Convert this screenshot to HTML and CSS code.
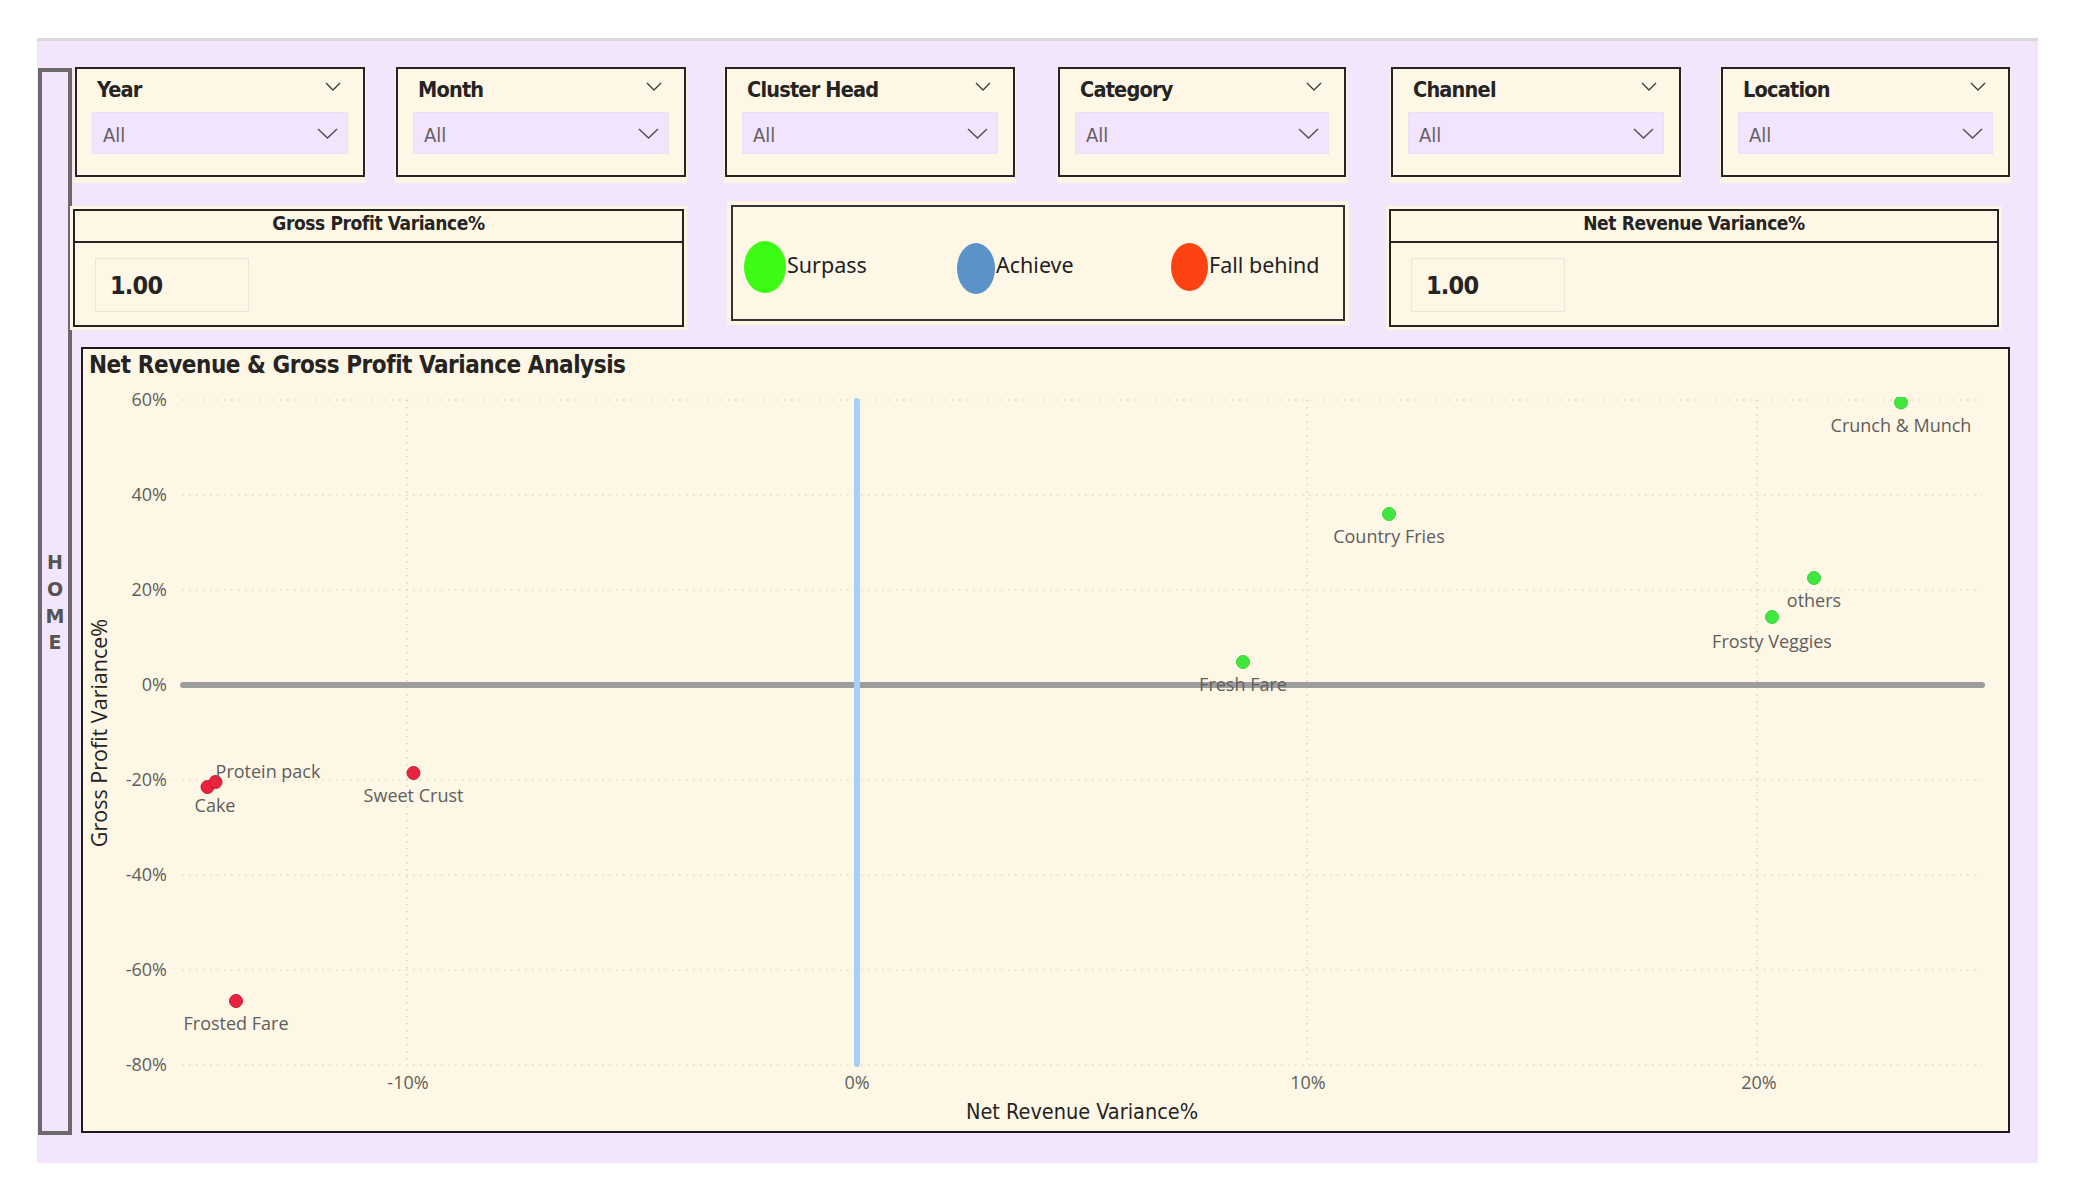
FILE: index.html
```html
<!DOCTYPE html>
<html>
<head>
<meta charset="utf-8">
<title>Variance Analysis</title>
<link rel="stylesheet" href="styles.css">
</head>
<body>
<div class="canvas">
  <div class="home-bar"><div class="home-text">H<br>O<br>M<br>E</div></div>
  <div class="main">
    <div class="slicer-row">
      <div class="slicer"><div class="slicer-head"><span class="slicer-title">Year</span><svg class="chev-s" viewBox="0 0 16 9"><polyline points="1,1 8,8 15,1"/></svg></div><div class="dropdown"><span>All</span><svg class="chev-d" viewBox="0 0 21 11"><polyline points="1,1 10.5,10 20,1"/></svg></div></div>
      <div class="slicer"><div class="slicer-head"><span class="slicer-title">Month</span><svg class="chev-s" viewBox="0 0 16 9"><polyline points="1,1 8,8 15,1"/></svg></div><div class="dropdown"><span>All</span><svg class="chev-d" viewBox="0 0 21 11"><polyline points="1,1 10.5,10 20,1"/></svg></div></div>
      <div class="slicer"><div class="slicer-head"><span class="slicer-title">Cluster Head</span><svg class="chev-s" viewBox="0 0 16 9"><polyline points="1,1 8,8 15,1"/></svg></div><div class="dropdown"><span>All</span><svg class="chev-d" viewBox="0 0 21 11"><polyline points="1,1 10.5,10 20,1"/></svg></div></div>
      <div class="slicer"><div class="slicer-head"><span class="slicer-title">Category</span><svg class="chev-s" viewBox="0 0 16 9"><polyline points="1,1 8,8 15,1"/></svg></div><div class="dropdown"><span>All</span><svg class="chev-d" viewBox="0 0 21 11"><polyline points="1,1 10.5,10 20,1"/></svg></div></div>
      <div class="slicer"><div class="slicer-head"><span class="slicer-title">Channel</span><svg class="chev-s" viewBox="0 0 16 9"><polyline points="1,1 8,8 15,1"/></svg></div><div class="dropdown"><span>All</span><svg class="chev-d" viewBox="0 0 21 11"><polyline points="1,1 10.5,10 20,1"/></svg></div></div>
      <div class="slicer"><div class="slicer-head"><span class="slicer-title">Location</span><svg class="chev-s" viewBox="0 0 16 9"><polyline points="1,1 8,8 15,1"/></svg></div><div class="dropdown"><span>All</span><svg class="chev-d" viewBox="0 0 21 11"><polyline points="1,1 10.5,10 20,1"/></svg></div></div>
    </div>

    <div class="kpi-row">
      <div class="kpi kpi-gp">
        <div class="kpi-head">Gross Profit Variance%</div>
        <div class="kpi-value">1.00</div>
      </div>
      <div class="legend">
        <div class="legend-item"><span class="dot-lg dot-green"></span><span>Surpass</span></div>
        <div class="legend-item"><span class="dot-lg dot-blue"></span><span>Achieve</span></div>
        <div class="legend-item"><span class="dot-lg dot-red"></span><span>Fall behind</span></div>
      </div>
      <div class="kpi kpi-nr">
        <div class="kpi-head">Net Revenue Variance%</div>
        <div class="kpi-value">1.00</div>
      </div>
    </div>

    <div class="chart">
      <div class="chart-title">Net Revenue &amp; Gross Profit Variance Analysis</div>
      <svg class="plot" viewBox="83 349 1925 782">
        <defs>
          <clipPath id="plotclip"><rect x="176" y="397" width="1812" height="676"/></clipPath>
        </defs>
        <g class="grid">
          <line x1="182" y1="400" x2="1982" y2="400"/>
          <line x1="182" y1="495" x2="1982" y2="495"/>
          <line x1="182" y1="590" x2="1982" y2="590"/>
          <line x1="182" y1="780" x2="1982" y2="780"/>
          <line x1="182" y1="875" x2="1982" y2="875"/>
          <line x1="182" y1="970" x2="1982" y2="970"/>
          <line x1="182" y1="1065" x2="1982" y2="1065"/>
          <line x1="407" y1="400" x2="407" y2="1065"/>
          <line x1="1307" y1="400" x2="1307" y2="1065"/>
          <line x1="1757" y1="400" x2="1757" y2="1065"/>
        </g>
        <g class="ylab">
          <text x="167" y="401">60%</text>
          <text x="167" y="496">40%</text>
          <text x="167" y="591">20%</text>
          <text x="167" y="686">0%</text>
          <text x="167" y="781">-20%</text>
          <text x="167" y="876">-40%</text>
          <text x="167" y="971">-60%</text>
          <text x="167" y="1066">-80%</text>
        </g>
        <g class="xlab">
          <text x="408" y="1084">-10%</text>
          <text x="857" y="1084">0%</text>
          <text x="1308" y="1084">10%</text>
          <text x="1759" y="1084">20%</text>
        </g>
        <text class="xtitle" x="1082" y="1113">Net Revenue Variance%</text>
        <text class="ytitle" transform="translate(101 733) rotate(-90)">Gross Profit Variance%</text>
        <line class="ref-h" x1="183" y1="685" x2="1982" y2="685"/>
        <line class="ref-v" x1="857" y1="401" x2="857" y2="1064"/>
        <g clip-path="url(#plotclip)">
          <circle class="pt-g" cx="1901" cy="402.5" r="6.5"/>
          <circle class="pt-g" cx="1389" cy="514" r="6.5"/>
          <circle class="pt-g" cx="1814" cy="578" r="6.5"/>
          <circle class="pt-g" cx="1772" cy="617" r="6.5"/>
          <circle class="pt-g" cx="1243" cy="662" r="6.5"/>
          <circle class="pt-r" cx="413.5" cy="773" r="6.5"/>
          <circle class="pt-r" cx="207.5" cy="787" r="6.5"/>
          <circle class="pt-r" cx="215.5" cy="782" r="6.5"/>
          <circle class="pt-r" cx="236" cy="1001" r="6.5"/>
        </g>
        <g class="dlab">
          <text x="1901" y="427">Crunch &amp; Munch</text>
          <text x="1389" y="538">Country Fries</text>
          <text x="1814" y="602">others</text>
          <text x="1772" y="643">Frosty Veggies</text>
          <text x="1243" y="686">Fresh Fare</text>
          <text x="413.5" y="797">Sweet Crust</text>
          <text x="215" y="807">Cake</text>
          <text x="268" y="773">Protein pack</text>
          <text x="236" y="1025">Frosted Fare</text>
        </g>
      </svg>
    </div>
  </div>
</div>
</body>
</html>
```

FILE: styles.css
```css
html, body {
  margin: 0;
  padding: 0;
  background: #ffffff;
}

body {
  width: 2075px;
  height: 1200px;
  overflow: hidden;
  font-family: "DejaVu Sans Condensed", "DejaVu Sans", sans-serif;
  color: #252423;
}

.canvas {
  margin: 38px 0 0 37px;
  width: 2001px;
  height: 1125px;
  box-sizing: border-box;
  border-top: 3px solid #d9d9d9;
  background: #f3e6fc;
  display: flex;
  align-items: flex-start;
}

/* HOME navigation bar */
.home-bar {
  margin: 27px 0 0 1px;
  width: 34px;
  height: 1067px;
  box-sizing: border-box;
  border: 4px solid #6c696c;
  display: flex;
  align-items: center;
  justify-content: center;
}

.home-text {
  font-family: "DejaVu Sans", sans-serif;
  font-weight: bold;
  font-size: 19px;
  line-height: 26.7px;
  color: #545454;
  text-align: center;
  margin-top: 2px;
}

.main {
  margin: 26px 0 0 3px;
  width: 1935px;
}

/* Slicers */
.slicer-row {
  display: flex;
  height: 110px;
}

.slicer {
  width: 290px;
  height: 110px;
  box-sizing: border-box;
  border: 2px solid #252423;
  background: #fef7e6;
  padding: 0 15px;
  box-shadow: 0 5px 0 1px #fdf5e4;
}

.slicer:nth-child(2) { margin-left: 31px; }
.slicer:nth-child(3) { margin-left: 39px; }
.slicer:nth-child(4) { margin-left: 43px; width: 288px; }
.slicer:nth-child(5) { margin-left: 45px; }
.slicer:nth-child(6) { margin-left: 40px; width: 289px; }

.slicer-head {
  height: 43px;
  box-sizing: border-box;
  display: flex;
  justify-content: space-between;
  align-items: flex-start;
  padding: 8px 7px 0 5px;
}

.slicer-title {
  font-weight: bold;
  font-size: 21.5px;
  line-height: 26px;
  color: #252423;
  letter-spacing: -0.8px;
}

.chev-s {
  width: 16px;
  height: 9px;
  margin-top: 5px;
  fill: none;
  stroke: #3b3a39;
  stroke-width: 1.3;
}

.dropdown {
  height: 42px;
  box-sizing: border-box;
  background: #f1e4fc;
  border: 1px solid #ebe0f3;
  display: flex;
  align-items: center;
  justify-content: space-between;
  padding: 0 9px 0 10px;
  font-size: 20px;
  color: #646064;
}

.dropdown span {
  margin-top: 3px;
}

.chev-d {
  width: 21px;
  height: 11px;
  margin-top: 1px;
  fill: none;
  stroke: #4d4a4d;
  stroke-width: 1.3;
}

/* KPI row */
.kpi-row {
  margin-top: 28px;
  height: 122px;
  display: flex;
  align-items: flex-start;
}

.kpi {
  margin-top: 4px;
  height: 118px;
  box-sizing: border-box;
  border: 2px solid #252423;
  background: #fef7e6;
  box-shadow: 0 0 0 3px #fdf5e4;
}

.kpi-gp {
  margin-left: -2px;
  width: 611px;
}

.kpi-nr {
  margin-left: 44px;
  width: 610px;
}

.kpi-head {
  height: 30px;
  border-bottom: 2px solid #252423;
  text-align: center;
  font-weight: bold;
  font-size: 19px;
  line-height: 25px;
  letter-spacing: -0.4px;
}

.kpi-value {
  margin: 15px 0 0 20px;
  width: 154px;
  height: 54px;
  box-sizing: border-box;
  border: 1px solid #ebe5da;
  padding-left: 14px;
  font-weight: bold;
  font-size: 25px;
  line-height: 54px;
  letter-spacing: -0.8px;
  color: #252423;
}

/* Legend */
.legend {
  margin-left: 47px;
  width: 614px;
  height: 116px;
  box-sizing: border-box;
  border: 2px solid #333333;
  background: #fef7e6;
  box-shadow: 0 0 0 4px #fdf5e4;
  display: grid;
  grid-template-columns: 213px 214px auto;
  align-items: center;
  padding: 8px 0 0 11px;
  font-family: "Noto Sans", "Open Sans", sans-serif;
  font-size: 21.5px;
  color: #1f1f1f;
}

.legend-item {
  display: flex;
  align-items: center;
  gap: 1px;
}

.legend-item span:last-child {
  margin-top: -5px;
}

.dot-lg {
  display: block;
  border-radius: 50%;
}

.dot-green { width: 42px; height: 52px; background: #3cfb14; }
.dot-blue  { width: 38px; height: 51px; background: #5b92c8; margin-top: 3px; }
.dot-red   { width: 37px; height: 48px; background: #fe4313; }

/* Chart */
.chart {
  margin: 20px 0 0 6px;
  width: 1929px;
  height: 786px;
  box-sizing: border-box;
  border: 2px solid #1e1e1e;
  background: #fef7e6;
  position: relative;
}

.chart-title {
  padding: 2px 0 0 6px;
  font-weight: bold;
  font-size: 24px;
  line-height: 29px;
  color: #252423;
  letter-spacing: -0.45px;
}

.plot {
  position: absolute;
  left: 0;
  top: 0;
  width: 1925px;
  height: 782px;
  overflow: visible;
}

.grid line {
  stroke: #cdcac4;
  stroke-width: 1.2;
  stroke-dasharray: 1.5 5.5;
}

.ylab text {
  font-family: "Open Sans", "Noto Sans", sans-serif;
  font-size: 18px;
  fill: #605e5c;
  text-anchor: end;
  dominant-baseline: middle;
}

.xlab text {
  font-family: "Open Sans", "Noto Sans", sans-serif;
  font-size: 18px;
  fill: #605e5c;
  text-anchor: middle;
  dominant-baseline: middle;
}

.xtitle {
  font-family: "DejaVu Sans Condensed", "DejaVu Sans", sans-serif;
  font-size: 21.5px;
  fill: #252423;
  text-anchor: middle;
  dominant-baseline: middle;
}

.ytitle {
  font-family: "Open Sans", "Noto Sans", sans-serif;
  font-size: 21.5px;
  fill: #252423;
  text-anchor: middle;
  dominant-baseline: middle;
}

.ref-h {
  stroke: #9d9d9d;
  stroke-width: 6;
  stroke-linecap: round;
}

.ref-v {
  stroke: #a7d0f8;
  stroke-width: 6;
  stroke-linecap: round;
}

.pt-g {
  fill: #3fe73f;
  stroke: #36d636;
  stroke-width: 1;
}

.pt-r {
  fill: #e9233d;
  stroke: #c8182f;
  stroke-width: 1;
}

.dlab text {
  font-family: "Open Sans", "Noto Sans", sans-serif;
  font-size: 18px;
  fill: #605e5c;
  text-anchor: middle;
  dominant-baseline: middle;
}
```
